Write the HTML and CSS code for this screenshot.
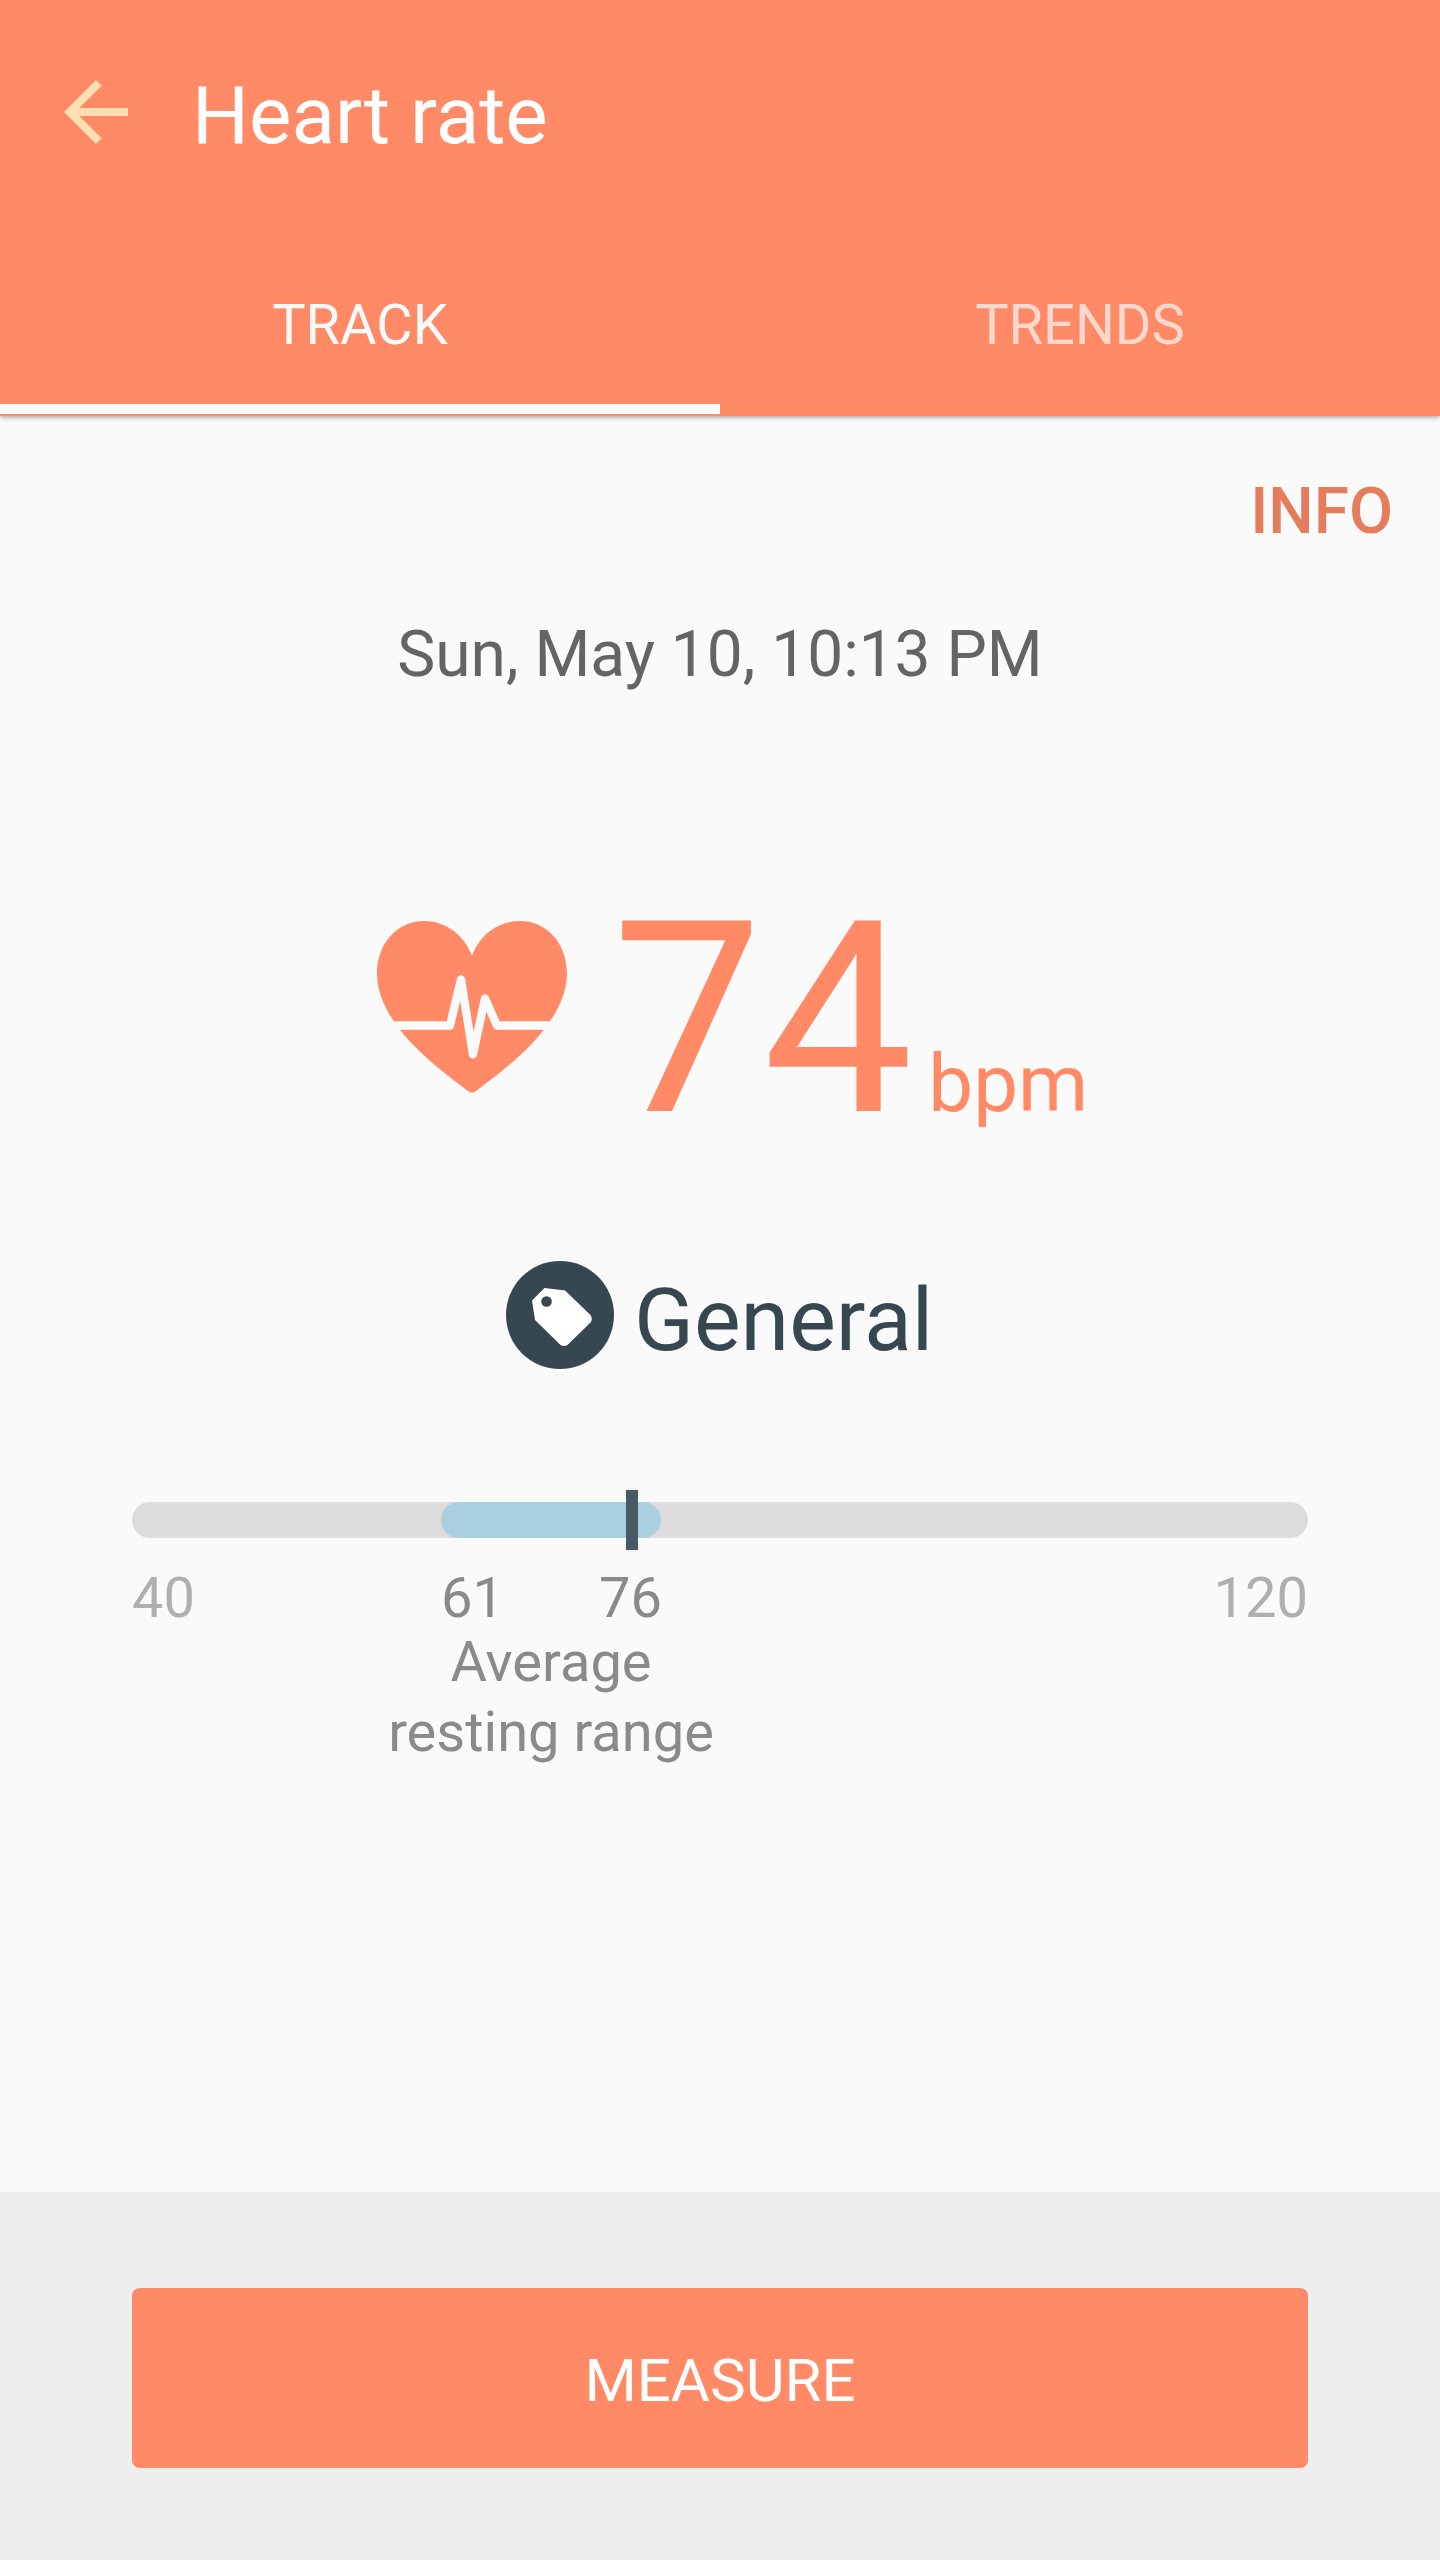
FILE: index.html
```html
<!DOCTYPE html>
<html lang="en">
<head>
<meta charset="UTF-8">
<meta name="viewport" content="width=device-width, initial-scale=1.0">
<title>Heart rate</title>
<link rel="stylesheet" href="styles.css">
</head>
<body>

<header class="app-header">
  <div class="title-bar">
    <svg class="back-icon" viewBox="0 0 24 24"><path d="M20 11H7.83l5.59-5.59L12 4l-8 8 8 8 1.41-1.41L7.83 13H20v-2z"/></svg>
    <h1>Heart rate</h1>
  </div>
  <nav class="tabs">
    <a class="tab active">TRACK</a>
    <a class="tab">TRENDS</a>
  </nav>
</header>

<main class="content">
  <a class="info-link">INFO</a>
  <p class="date">Sun, May 10, 10:13 PM</p>

  <div class="reading">
    <svg class="heart-icon" viewBox="0 0 190 172">
      <path class="heart" d="M95 35C103 13 122 0 143 0C170 0 190 23 190 52C190 105 125 150 99 170Q95 173 91 170C65 150 0 105 0 52C0 23 20 0 47 0C68 0 87 13 95 35Z"/>
      <path class="pulse" d="M0 104.500H73L84 58.500L96 133.500L108 77.500L120 104.500H190"/>
    </svg>
    <span class="value">74</span>
    <span class="unit">bpm</span>
  </div>

  <div class="tag">
    <svg class="tag-icon" viewBox="0 0 108 108">
      <circle class="tag-circle" cx="54" cy="54" r="54"/>
      <path class="tag-label" d="M38.500 27L59 29.500L84.500 54Q87 58 84.500 61.500L62 83.500Q58 86.500 54 83.500L29 59L26 39.500Z"/>
      <circle class="tag-circle" cx="40.500" cy="40.500" r="5.300"/>
    </svg>
    <span>General</span>
  </div>

  <div class="range">
    <div class="bar">
      <div class="resting"></div>
      <div class="marker"></div>
    </div>
    <div class="labels">
      <span>40</span>
      <span class="dark">61</span>
      <span class="dark">76</span>
      <span class="max">120</span>
    </div>
    <p class="caption">Average<br>resting range</p>
  </div>
</main>

<footer class="footer">
  <button class="measure">MEASURE</button>
</footer>

</body>
</html>
```
FILE: styles.css
```css
* {
  box-sizing: border-box;
}

body {
  margin: 0;
  height: 2560px;
  display: flex;
  flex-direction: column;
  font-family: Roboto, sans-serif;
  background-color: #fafafa;
}

h1, p {
  margin: 0;
  font-weight: 400;
}

.app-header {
  height: 416px;
  background-color: #ff8a65;
  box-shadow: 0 1px 5px rgba(0, 0, 0, 0.4);
}

.title-bar {
  height: 224px;
  padding-left: 48px;
  display: flex;
  align-items: center;
  gap: 48px;
}

.back-icon {
  width: 96px;
  height: 96px;
  fill: #ffe0b2;
}

.title-bar h1 {
  padding-top: 8px;
  font-size: 80px;
  line-height: 80px;
  color: #fff;
}

.tabs {
  height: 190px;
  display: flex;
}

.tab {
  flex: 1;
  padding-top: 73px;
  font-size: 56px;
  line-height: 56px;
  text-align: center;
  color: rgba(250, 250, 250, 0.7);
}

.tab.active {
  color: #fafafa;
  border-bottom: 10px solid #fafafa;
}

.content {
  flex: 1;
  display: flex;
  flex-direction: column;
}

.info-link {
  align-self: flex-end;
  margin: 64px 47px 0 0;
  font-size: 64px;
  line-height: 64px;
  font-weight: 500;
  color: #e57c5b;
}

.date {
  margin-top: 79px;
  font-size: 64px;
  line-height: 64px;
  text-align: center;
  color: #646464;
}

.reading {
  height: 268px;
  margin: 198px 0 0 377px;
  display: flex;
  align-items: baseline;
  color: #ff8a65;
}

.heart-icon {
  width: 190px;
  height: 172px;
  margin-bottom: 60px;
  align-self: flex-end;
}

.heart {
  fill: #ff8a65;
}

.pulse {
  fill: none;
  stroke: #fafafa;
  stroke-width: 8.300;
  stroke-linejoin: round;
}

.value {
  margin-left: 45px;
  font-size: 268px;
  line-height: 268px;
}

.unit {
  margin-left: 15px;
  font-size: 80px;
  line-height: 80px;
}

.tag {
  margin-top: 108px;
  padding-left: 506px;
  display: flex;
  gap: 20px;
  font-size: 88px;
  line-height: 118px;
  color: #37474f;
}

.tag-icon {
  width: 108px;
  height: 108px;
}

.tag-circle {
  fill: #37474f;
}

.tag-label {
  fill: #fff;
}

.range {
  width: 1176px;
  margin: 123px auto 0;
  font-size: 56px;
  color: #afafaf;
}

.bar {
  position: relative;
  height: 36px;
  border-radius: 18px;
  background-color: #ddd;
}

.resting {
  width: 220px;
  height: 36px;
  margin-left: 309px;
  border-radius: 18px;
  background-color: #a9cfe0;
}

.marker {
  position: absolute;
  left: 494px;
  top: -12px;
  width: 12px;
  height: 60px;
  background-color: #455a64;
}

.labels {
  margin-top: 32px;
  display: grid;
  grid-template-columns: 309px 158px 1fr 1fr;
  line-height: 56px;
}

.dark,
.caption {
  color: #8a8a8a;
}

.max {
  text-align: right;
}

.caption {
  width: 400px;
  margin: 1px 0 0 219px;
  line-height: 70px;
  text-align: center;
}

.footer {
  height: 368px;
  padding: 96px 132px 0;
  background-color: #eee;
}

.measure {
  display: block;
  width: 100%;
  height: 180px;
  padding: 5px 0 0;
  border: none;
  border-radius: 8px;
  font-family: inherit;
  font-size: 60px;
  line-height: 60px;
  color: #fff;
  background-color: #ff8a65;
}
```
